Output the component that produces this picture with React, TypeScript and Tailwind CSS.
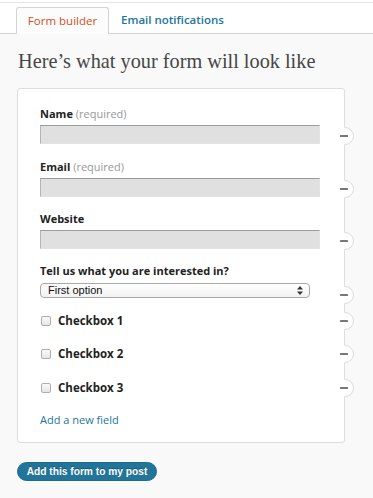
import React from "react";

const sans = "font-['Open_Sans',sans-serif]";

function Minus({ className = "" }: { className?: string }) {
  return (
    <svg
      width="20"
      height="20"
      viewBox="0 0 20 20"
      className={`absolute right-[-35px] ${className}`}
    >
      <circle cx="10" cy="10" r="8.5" fill="#fff" />
      <path d="M10 1.5 A8.5 8.5 0 0 1 10 18.5" fill="none" stroke="#dcdcdc" />
      <rect x="5" y="9" width="8" height="2" rx="0.5" fill="#777" />
    </svg>
  );
}

function TextField({
  label,
  required,
  className = "",
}: {
  label: string;
  required?: boolean;
  className?: string;
}) {
  return (
    <div className={className}>
      <div className="text-[11px] leading-[16px] text-[#222]">
        <span className="font-bold">{label}</span>
        {required && <span className="text-[#999]"> (required)</span>}
      </div>
      <div className="relative mt-[3px] w-[280px]">
        <div className="h-[19px] w-full border border-[#e2e2e2] border-t-[#9c9c9c] border-l-[#b4b4b4] bg-[#e0e0e0]" />
        <Minus className="top-1/2 -translate-y-1/2 mt-[1px]" />
      </div>
    </div>
  );
}

function CheckRow({ label, className = "" }: { label: string; className?: string }) {
  return (
    <div className={`relative flex h-[16px] w-[280px] items-center ${className}`}>
      <span className="ml-[1px] h-[10px] w-[10px] rounded-[2px] border border-[#adadad] bg-gradient-to-b from-[#fafafa] to-[#e6e6e6]" />
      <span className="ml-[7px] text-[11.5px] font-bold text-[#222]">{label}</span>
      <Minus className="top-1/2 -translate-y-1/2" />
    </div>
  );
}

export default function App() {
  return (
    <div className={`h-[498px] w-[373px] overflow-hidden bg-[#f9f9f9] ${sans}`}>
      <div className="bg-white pt-[2px]">
        <div className="border-t border-[#e5e5e5]">
          <div className="flex h-[31px] items-end border-b border-[#d4d4d4] pl-[16px]">
            <div className="-mb-px flex h-[27px] w-[93px] items-center justify-center rounded-t-[3px] border border-b-0 border-[#d4d4d4] bg-[#fcfcfc] text-[11.5px] text-[#d54e21]">
              Form builder
            </div>
            <div className="flex h-[26px] items-center pl-[12px] text-[11.5px] font-semibold text-[#21759b]">
              Email notifications
            </div>
          </div>
        </div>
      </div>

      <h1 className="ml-[18px] mt-[14px] font-['Liberation_Serif',serif] text-[20.3px] leading-[26px] text-[#464646]">
        Here’s what your form will look like
      </h1>

      <div className="ml-[17px] mt-[14px] h-[355px] w-[328px] rounded-[3px] border border-[#dedede] bg-white pl-[22px] pt-[17px]">
        <TextField label="Name" required />
        <TextField label="Email" required className="mt-[15px]" />
        <TextField label="Website" className="mt-[14px]" />

        <div className="mt-[14px]">
          <div className="text-[11px] font-bold leading-[16px] text-[#222]">
            Tell us what you are interested in?
          </div>
          <div className="relative mt-[4px] w-[280px]">
            <div className="flex h-[15px] w-[270px] items-center justify-between rounded-[4px] border border-[#a9a9a9] bg-gradient-to-b from-white to-[#f1f1f1] pl-[7px] pr-[6px] font-['Liberation_Sans',sans-serif] text-[11px] text-[#111]">
              <span>First option</span>
              <svg width="6" height="9" viewBox="0 0 6 9">
                <path d="M3 0 L6 3.5 H0 Z M3 9 L6 5.5 H0 Z" fill="#333" />
              </svg>
            </div>
            <Minus className="top-1/2 -translate-y-1/2 mt-[4px]" />
          </div>
        </div>

        <CheckRow label="Checkbox 1" className="mt-[15px]" />
        <CheckRow label="Checkbox 2" className="mt-[17px]" />
        <CheckRow label="Checkbox 3" className="mt-[18px]" />

        <div className="mt-[16px] text-[11px] leading-[16px] text-[#21759b]">Add a new field</div>
      </div>

      <button className="ml-[17px] mt-[19px] flex h-[19px] w-[140px] items-center justify-center rounded-full border border-[#1e6a8d] bg-[#21759b] font-['Liberation_Sans',sans-serif] text-[10.2px] font-bold text-white [text-shadow:0_-1px_0_rgba(0,0,0,0.3)]">
        Add this form to my post
      </button>
    </div>
  );
}
